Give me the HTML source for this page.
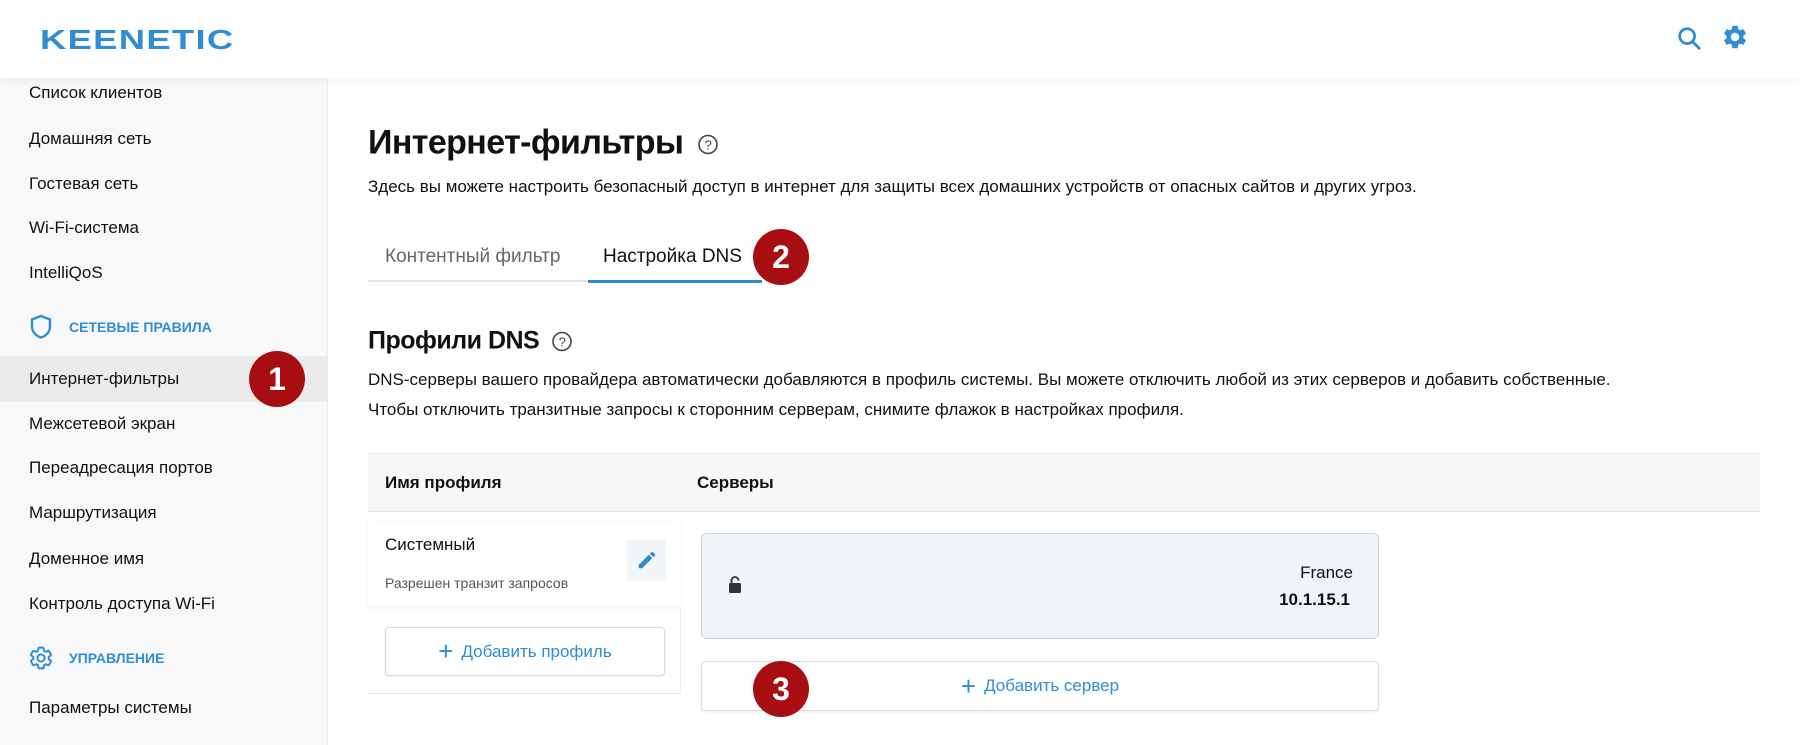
<!DOCTYPE html>
<html><head><meta charset="utf-8"><style>
*{margin:0;padding:0;box-sizing:border-box}
body{width:1800px;height:745px;overflow:hidden;background:#fff;font-family:"Liberation Sans",Arial,sans-serif;color:#111;position:relative}
.a{position:absolute;white-space:nowrap}
.hdr{position:absolute;left:0;top:0;width:1800px;height:78px;background:#fff;box-shadow:0 2px 10px rgba(0,0,0,.06);z-index:2}
.side{position:absolute;left:0;top:78px;width:328px;height:667px;background:#f8f8f8;border-right:1px solid #ececec}
.si{position:absolute;left:29px;font-size:17px;transform:translateY(-50%)}
.sec{position:absolute;left:69px;font-size:14px;font-weight:bold;color:#2f8dd6;transform:translateY(-50%)}
.badge{position:absolute;width:56px;height:56px;border-radius:50%;background:#a80d12;color:#fff;font-weight:bold;font-size:32px;text-align:center;line-height:56px;transform:translate(-50%,-50%);z-index:3}
.c{transform:translateY(-50%)}
.btn{position:absolute;border:1px solid #d3dde5;border-radius:4px;background:#fff;color:#2f8dd6;font-size:17px;display:flex;align-items:center;justify-content:center;gap:8px;box-shadow:0 1px 2px rgba(0,0,0,.08)}
.h{display:inline-block;vertical-align:middle}
</style></head><body>
<div class="hdr">
 <div class="a" style="left:40px;top:24px;font-size:28px;font-weight:bold;color:#2f8dd6;letter-spacing:1px;transform:scaleX(1.3);transform-origin:left">KEENETIC</div>
 <svg class="a" style="left:1676px;top:25px" width="26" height="26" viewBox="0 0 28 28"><circle cx="12" cy="12" r="8" fill="none" stroke="#2f8dd6" stroke-width="3"/><path d="M18 18l7 7" stroke="#2f8dd6" stroke-width="3" stroke-linecap="round"/></svg>
 <svg class="a" style="left:1721px;top:23px" width="28" height="28" viewBox="0 0 24 24"><path fill="#2f8dd6" d="M19.14 12.94c.04-.3.06-.61.06-.94s-.02-.64-.07-.94l2.03-1.58a.49.49 0 0 0 .12-.61l-1.92-3.32a.49.49 0 0 0-.59-.22l-2.39.96c-.5-.38-1.03-.7-1.620-.94l-.36-2.54A.48.48 0 0 0 13.92 2.4h-3.84c-.24 0-.43.17-.47.41l-.36 2.54c-.59.24-1.13.57-1.62.94l-2.39-.96a.48.48 0 0 0-.59.22L2.74 8.87a.47.47 0 0 0 .12.61l2.03 1.58c-.05.3-.09.63-.09.94s.02.64.07.94l-2.03 1.58a.49.49 0 0 0-.12.61l1.92 3.32c.12.22.37.29.59.22l2.39-.96c.5.38 1.03.7 1.62.94l.36 2.54c.05.24.24.41.48.41h3.84c.24 0 .44-.17.47-.41l.36-2.54c.59-.24 1.13-.56 1.62-.94l2.39.96c.22.08.47 0 .59-.22l1.920-3.32a.48.48 0 0 0-.12-.61l-2.01-1.58zM12 15.6A3.6 3.6 0 1 1 12 8.4a3.6 3.6 0 0 1 0 7.2z"/></svg>
</div>
<div class="side">
 <div class="si" style="top:15px">Список клиентов</div>
 <div class="si" style="top:61px">Домашняя сеть</div>
 <div class="si" style="top:106px">Гостевая сеть</div>
 <div class="si" style="top:150px">Wi-Fi-система</div>
 <div class="si" style="top:195px">IntelliQoS</div>
 <svg class="a" style="left:29px;top:236px" width="24" height="26" viewBox="0 0 24 26"><path d="M12 2L3 5.5v7c0 5.5 4 9.5 9 11 5-1.5 9-5.5 9-11v-7z" fill="none" stroke="#2f8dd6" stroke-width="2.4"/></svg>
 <div class="sec" style="top:249px">СЕТЕВЫЕ ПРАВИЛА</div>
 <div style="position:absolute;left:0;top:278px;width:328px;height:46px;background:#ebebeb"></div>
 <div class="si" style="top:301px">Интернет-фильтры</div>
 <div class="si" style="top:346px">Межсетевой экран</div>
 <div class="si" style="top:390px">Переадресация портов</div>
 <div class="si" style="top:435px">Маршрутизация</div>
 <div class="si" style="top:481px">Доменное имя</div>
 <div class="si" style="top:526px">Контроль доступа Wi-Fi</div>
 <svg class="a" style="left:28px;top:567px" width="26" height="26" viewBox="0 0 24 24"><path fill="none" stroke="#2f8dd6" stroke-width="1.8" d="M19.14 12.94c.04-.3.06-.61.06-.94s-.02-.64-.07-.94l2.03-1.58a.49.49 0 0 0 .12-.61l-1.92-3.32a.49.49 0 0 0-.59-.22l-2.39.96c-.5-.38-1.03-.7-1.62-.94l-.36-2.54A.48.48 0 0 0 13.92 2.4h-3.84c-.24 0-.43.17-.47.41l-.36 2.54c-.59.24-1.13.57-1.62.94l-2.39-.96a.48.48 0 0 0-.59.22L2.74 8.87a.47.47 0 0 0 .12.61l2.03 1.58c-.05.3-.09.63-.09.94s.02.64.07.94l-2.03 1.58a.49.49 0 0 0-.12.61l1.92 3.32c.12.22.37.29.59.22l2.39-.96c.5.38 1.03.7 1.62.94l.36 2.54c.05.24.24.41.48.41h3.84c.24 0 .44-.17.47-.41l.36-2.54c.59-.24 1.13-.56 1.62-.94l2.39.96c.22.08.47 0 .59-.22l1.92-3.32a.48.48 0 0 0-.12-.61l-2.01-1.58z"/><circle cx="12" cy="12" r="3.3" fill="none" stroke="#2f8dd6" stroke-width="1.8"/></svg>
 <div class="sec" style="top:580px">УПРАВЛЕНИЕ</div>
 <div class="si" style="top:630px">Параметры системы</div>
</div>
<div class="badge" style="left:277px;top:379px">1</div>

<div class="a c" style="left:368px;top:143px;font-size:34px;font-weight:bold;letter-spacing:-0.6px">Интернет-фильтры<svg class="h" style="margin-left:14px" width="22" height="22" viewBox="0 0 22 22"><circle cx="11" cy="11" r="9" fill="none" stroke="#444" stroke-width="1.6"/><text x="11" y="16" font-size="13" font-weight="normal" text-anchor="middle" fill="#444" font-family="Liberation Sans">?</text></svg></div>
<div class="a c" style="left:368px;top:187px;font-size:17px">Здесь вы можете настроить безопасный доступ в интернет для защиты всех домашних устройств от опасных сайтов и других угроз.</div>
<div class="a c" style="left:385px;top:257px;font-size:19px;color:#666">Контентный фильтр</div>
<div class="a c" style="left:603px;top:257px;font-size:19px">Настройка DNS</div>
<div class="a" style="left:368px;top:280px;width:220px;height:2px;background:#e2e2e2"></div>
<div class="a" style="left:588px;top:280px;width:174px;height:3px;background:#2f8dd6"></div>
<div class="badge" style="left:781px;top:257px">2</div>

<div class="a c" style="left:368px;top:341px;font-size:25px;font-weight:bold;letter-spacing:-0.5px">Профили DNS<svg class="h" style="margin-left:12px" width="22" height="22" viewBox="0 0 22 22"><circle cx="11" cy="11" r="9" fill="none" stroke="#444" stroke-width="1.6"/><text x="11" y="16" font-size="13" font-weight="normal" text-anchor="middle" fill="#444" font-family="Liberation Sans">?</text></svg></div>
<div class="a c" style="left:368px;top:380px;font-size:17px">DNS-серверы вашего провайдера автоматически добавляются в профиль системы. Вы можете отключить любой из этих серверов и добавить собственные.</div>
<div class="a c" style="left:368px;top:410px;font-size:17px">Чтобы отключить транзитные запросы к сторонним серверам, снимите флажок в настройках профиля.</div>

<div class="a" style="left:368px;top:453px;width:1392px;height:59px;background:#f7f7f7;border-top:1px solid #ececec;border-bottom:1px solid #e6e6e6"></div>
<div class="a c" style="left:385px;top:483px;font-size:17px;font-weight:bold">Имя профиля</div>
<div class="a c" style="left:697px;top:483px;font-size:17px;font-weight:bold">Серверы</div>

<div class="a" style="left:368px;top:522px;width:313px;height:84px;background:#fff;box-shadow:0 1px 4px rgba(0,0,0,.08)"></div>
<div class="a" style="left:368px;top:606px;width:313px;height:88px;border-bottom:1px solid #e6e6e6;border-right:1px solid #eee"></div>
<div class="a c" style="left:385px;top:545px;font-size:17px">Системный</div>
<div class="a c" style="left:385px;top:583px;font-size:14px;color:#555">Разрешен транзит запросов</div>
<div class="a" style="left:627px;top:540px;width:39px;height:41px;background:#f3f6f8"></div>
<svg class="a" style="left:636px;top:549px" width="22" height="22" viewBox="0 0 24 24"><path fill="#2f8dd6" d="M3 17.25V21h3.75L17.81 9.94l-3.75-3.75zM20.71 7.04a1 1 0 0 0 0-1.41l-2.34-2.34a1 1 0 0 0-1.41 0l-1.83 1.83 3.75 3.75z"/></svg>
<div class="btn" style="left:385px;top:627px;width:280px;height:49px"><span style="font-size:26px;font-weight:200">+</span>Добавить профиль</div>

<div class="a" style="left:701px;top:533px;width:678px;height:106px;background:#eef4f8;border:1px solid #c9d6df;border-radius:6px"></div>
<svg class="a" style="left:728px;top:576px" width="14" height="18" viewBox="0 0 14 18"><rect x="1" y="7" width="12" height="10" rx="1.5" fill="#333"/><path d="M3.5 7V4.5a3.5 3.5 0 0 1 7 0" fill="none" stroke="#333" stroke-width="1.8"/></svg>
<div class="a c" style="right:447px;top:573px;font-size:17px">France</div>
<div class="a c" style="right:450px;top:600px;font-size:17px;font-weight:bold">10.1.15.1</div>
<div class="btn" style="left:701px;top:661px;width:678px;height:50px"><span style="font-size:26px;font-weight:200">+</span>Добавить сервер</div>
<div class="badge" style="left:781px;top:689px">3</div>
</body></html>
